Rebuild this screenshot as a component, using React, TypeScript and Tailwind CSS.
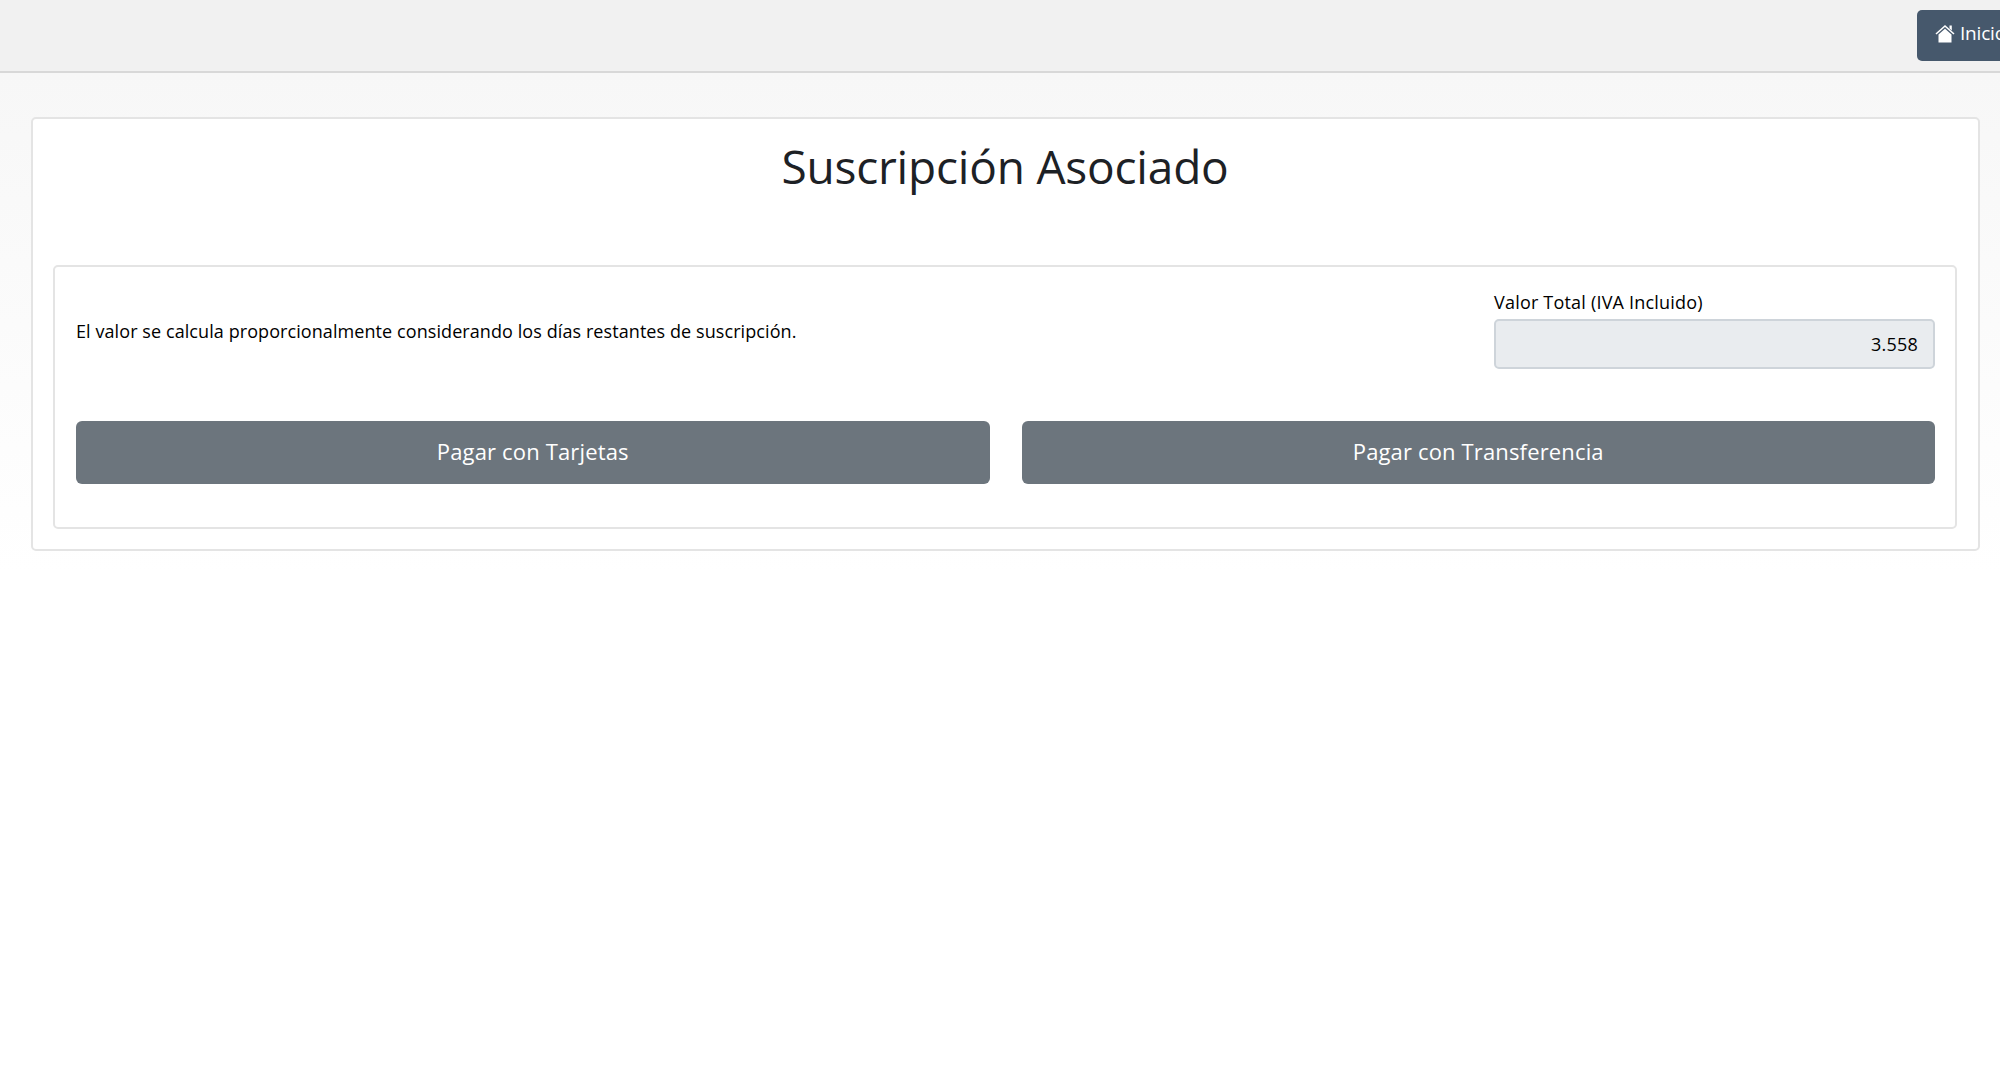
const font = "font-['Open_Sans','Noto_Sans',sans-serif]";

const HomeIcon = () => {
  return (
    <svg width="20" height="19" viewBox="0 0 20 19" fill="none" className="shrink-0">
      <path d="M1 10 L10 2 L19 10" stroke="currentColor" strokeWidth="1.6" />
      <path d="M14.5 1.5 H16.8 V6.5 L14.5 4.5 Z" fill="currentColor" />
      <path d="M3.5 10.5 L10 4.8 L16.5 10.5 V18.5 H3.5 Z" fill="currentColor" />
    </svg>
  );
};

const PayButton = ({ label }: { label: string }) => {
  return (
    <button className="flex-1 h-[63px] rounded-[6px] bg-[#6c757d] text-white text-[22px] tracking-[0.15px] pb-[3px]">
      {label}
    </button>
  );
};

export default function App() {
  return (
    <div className={`${font} w-[2000px] h-[1086px] overflow-hidden bg-white text-[#212529]`}>
      <nav className="h-[73px] bg-[#f1f1f1] border-b-2 border-[#d8d8d8] flex pl-[1917px] pt-[10px]">
        <a className="shrink-0 w-[120px] h-[51px] rounded-[5px] bg-[#46586c] text-white text-[19px] tracking-[-0.2px] flex items-center gap-[5px] pl-[18px] pb-[5px]">
          <HomeIcon />
          Inicio
        </a>
      </nav>
      <main className="h-[500px] bg-gradient-to-b from-[#f7f7f7] to-white pl-[31px] pr-[20px] pt-[44px]">
        <section className="h-[434px] rounded-[5px] border-2 border-[#e4e4e4] bg-white pl-[20px] pr-[21px] pt-[20px]">
          <h1 className="text-center text-[46px] leading-[54px] tracking-[-0.2px] text-[#1d2125] h-[126px]">
            Suscripción Asociado
          </h1>
          <div className="h-[264px] rounded-[5px] border-2 border-[#e4e4e4] pl-[21px] pr-[20px]">
            <div className="flex items-center h-[154px] pb-[29px]">
              <p className="flex-1 text-[18px] tracking-[0.08px] text-black pt-[4px]">
                El valor se calcula proporcionalmente considerando los días restantes de suscripción.
              </p>
              <div className="w-[441px]">
                <label className="block text-[18px] leading-[24px] tracking-[0.2px] text-black mb-[5px]">
                  Valor Total (IVA Incluido)
                </label>
                <div className="h-[50px] rounded-[5px] border-2 border-[#ced4da] bg-[#e9ecef] flex items-center justify-end pr-[15px] text-[18px] tracking-[0.2px] text-black">
                  3.558
                </div>
              </div>
            </div>
            <div className="flex gap-[32px]">
              <PayButton label="Pagar con Tarjetas" />
              <PayButton label="Pagar con Transferencia" />
            </div>
          </div>
        </section>
      </main>
    </div>
  );
}
